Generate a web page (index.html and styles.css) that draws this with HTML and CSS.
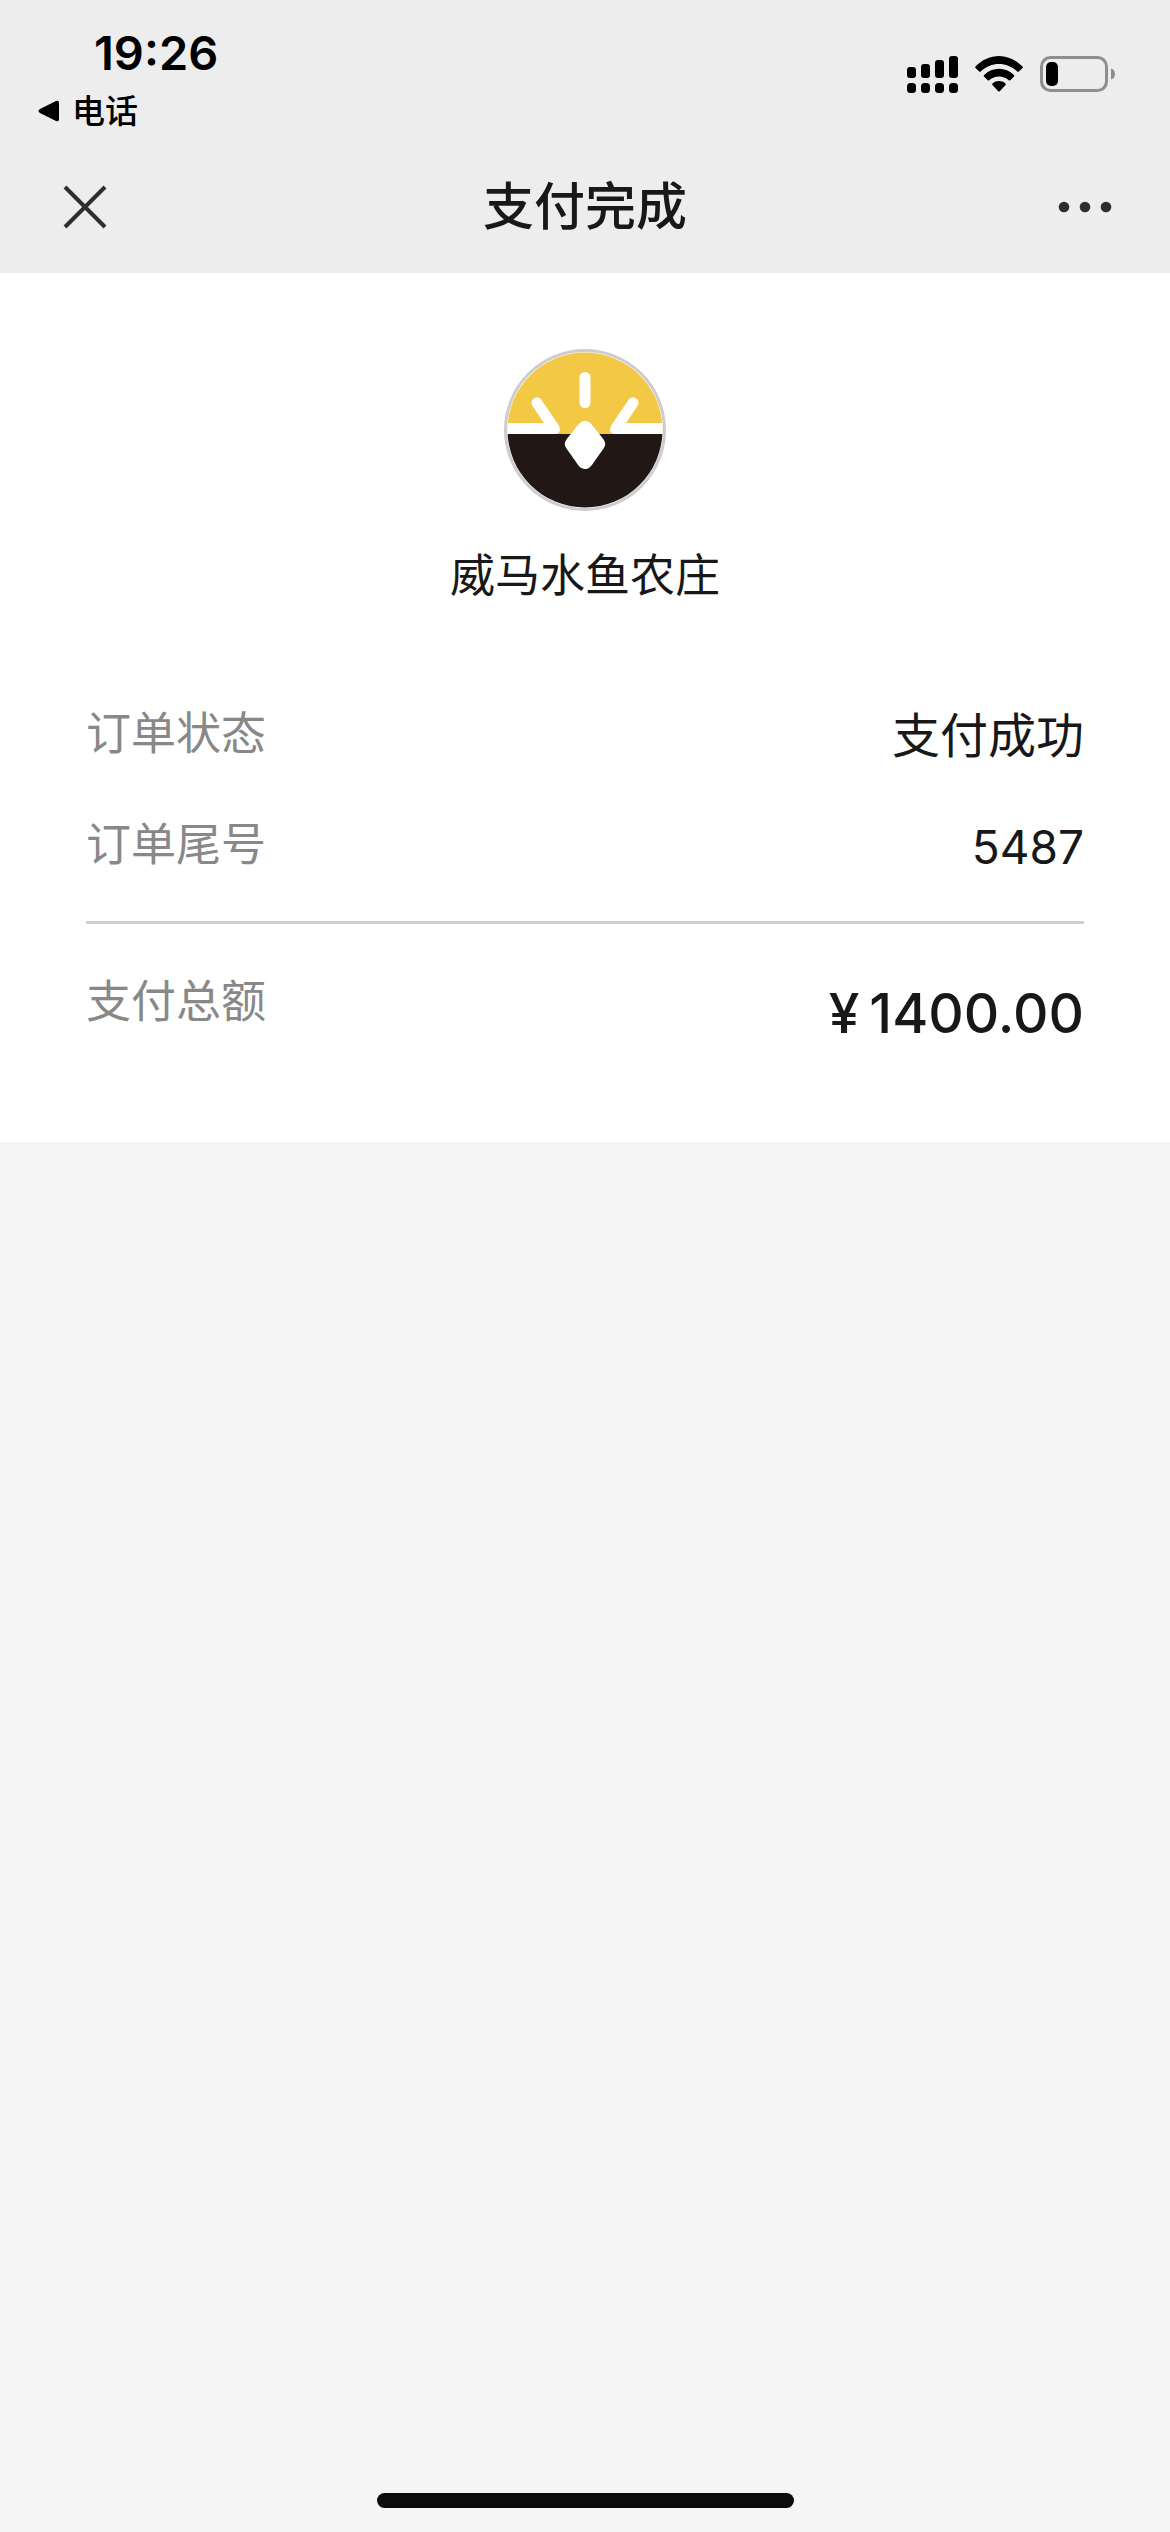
FILE: index.html
```
<!DOCTYPE html>
<html lang="zh-CN">
<head>
    <meta charset="UTF-8">
    <meta name="viewport" content="width=device-width, initial-scale=1.0">
    <title>支付完成</title>
    <link rel="stylesheet" href="styles.css">
</head>
<body>
    <header class="header">
        <div class="status-bar">
            <div class="status-left">
                <time class="time">19:26</time>
                <a class="back-link" href="#">
                    <svg width="22" height="22" viewBox="0 0 22 22" aria-hidden="true">
                        <path d="M2 9 L18 1 Q21 0 21 3 V19 Q21 22 18 21 L2 13 Q-1 11 2 9 Z"/>
                    </svg>
                    <span>电话</span>
                </a>
            </div>
            <div class="status-icons">
                <svg width="51" height="37" viewBox="0 0 51 37" aria-hidden="true">
                    <rect x="0" y="11" width="9" height="11" rx="3"/>
                    <rect x="14" y="8" width="9" height="14" rx="3"/>
                    <rect x="28" y="4" width="9" height="18" rx="3"/>
                    <rect x="42" y="0" width="9" height="22" rx="3"/>
                    <rect x="0" y="27" width="9" height="10" rx="3.500"/>
                    <rect x="14" y="27" width="9" height="10" rx="3.500"/>
                    <rect x="28" y="27" width="9" height="10" rx="3.500"/>
                    <rect x="42" y="27" width="9" height="10" rx="3.500"/>
                </svg>
                <svg width="48" height="37" viewBox="0 0 48 37" aria-hidden="true">
                    <path d="M0.500 10.500 C14 -3.500 34 -3.500 47.500 10.500 Q48.300 11.300 47.500 12 L43.800 15.600 Q43 16.200 42.300 15.500 C32 5.500 16 5.500 5.700 15.500 Q5 16.200 4.200 15.600 L0.500 12 Q-0.300 11.300 0.500 10.500 Z"/>
                    <path d="M9 19 C17.500 10.800 30.500 10.800 39 19 Q39.800 19.800 39 20.500 L35.300 24.200 Q34.600 24.800 33.800 24.200 C28 19.300 20 19.300 14.200 24.200 Q13.400 24.800 12.700 24.200 L9 20.500 Q8.200 19.800 9 19 Z"/>
                    <path d="M17.500 27.500 C21.300 24.300 26.700 24.300 30.500 27.500 Q31.300 28.300 30.500 29 L24.800 35.200 Q24 36 23.200 35.200 L17.500 29 Q16.700 28.300 17.500 27.500 Z"/>
                </svg>
                <svg width="75" height="36" viewBox="0 0 75 36" aria-hidden="true">
                    <rect class="battery-shell" x="1.500" y="1.500" width="65" height="33" rx="9"/>
                    <rect x="6" y="6" width="12" height="24" rx="5"/>
                    <path class="battery-cap" d="M71 12.500 Q75 13.500 75 18 Q75 22.500 71 23.500 Z"/>
                </svg>
            </div>
        </div>
        <nav class="nav-bar">
            <button class="nav-button" type="button" aria-label="关闭">
                <svg width="54" height="44" viewBox="0 0 54 44" aria-hidden="true">
                    <path class="close-icon" d="M7 2 L47 42 M47 2 L7 42"/>
                </svg>
            </button>
            <h1 class="title">支付完成</h1>
            <button class="nav-button nav-more" type="button" aria-label="更多">
                <svg width="54" height="12" viewBox="0 0 54 12" aria-hidden="true">
                    <circle cx="6" cy="6" r="5.300"/>
                    <circle cx="27" cy="6" r="5.300"/>
                    <circle cx="48" cy="6" r="5.300"/>
                </svg>
            </button>
        </nav>
    </header>

    <main class="receipt">
        <div class="merchant">
            <svg class="merchant-logo" width="162" height="162" viewBox="0 0 162 162" aria-hidden="true">
                <defs>
                    <clipPath id="logoClip"><circle cx="81" cy="81" r="77.500"/></clipPath>
                </defs>
                <circle cx="81" cy="81" r="79.500" fill="#fff" stroke="#cfcbce" stroke-width="3"/>
                <g clip-path="url(#logoClip)">
                    <rect width="162" height="85" fill="#f3c845"/>
                    <rect y="85" width="162" height="77" fill="#211815"/>
                    <path d="M81 28.500 V53.500" stroke="#fff" stroke-width="11" stroke-linecap="round"/>
                    <path d="M33 54 L50 79" stroke="#fff" stroke-width="11" stroke-linecap="round"/>
                    <path d="M129 54 L112 79" stroke="#fff" stroke-width="11" stroke-linecap="round"/>
                    <path d="M0 74 H45 L56 80 Q56 85 51 85 H0 Z M162 74 H117 L106 80 Q106 85 111 85 H162 Z" fill="#fff"/>
                    <path d="M81 80 L93 95 L81 112 L69 95 Z" fill="#fff" stroke="#fff" stroke-width="16" stroke-linejoin="round"/>
                </g>
            </svg>
            <h2 class="merchant-name">威马水鱼农庄</h2>
        </div>

        <dl class="details">
            <div class="row">
                <dt>订单状态</dt>
                <dd>支付成功</dd>
            </div>
            <div class="row">
                <dt>订单尾号</dt>
                <dd class="number">5487</dd>
            </div>
            <div class="row row-total">
                <dt>支付总额</dt>
                <dd class="amount"><span>¥</span><span>1400.00</span></dd>
            </div>
        </dl>
    </main>

    <footer class="home-area">
        <div class="home-indicator"></div>
    </footer>
</body>
</html>
```
FILE: styles.css
```
* {
    box-sizing: border-box;
}

body {
    display: flex;
    flex-direction: column;
    min-height: 100vh;
    margin: 0;
    background-color: #f5f5f5;
    color: #181818;
    font-family: Inter, "Noto Sans CJK SC", sans-serif;
}

h1, h2, dl, dd {
    margin: 0;
}

svg {
    display: block;
}

.header {
    background-color: #ededed;
}

.status-bar {
    display: flex;
    justify-content: space-between;
    height: 140px;
    padding: 24px 55px 0 38px;
    color: #000;
}

.time {
    display: block;
    padding-left: 56px;
    font-size: 47px;
    font-weight: 600;
    line-height: 58px;
}

.back-link {
    display: flex;
    align-items: center;
    gap: 12px;
    color: #000;
    font-size: 33px;
    font-weight: 500;
    line-height: 58px;
    text-decoration: none;
}

.status-icons {
    display: flex;
    align-items: flex-start;
    gap: 17px;
    padding-top: 32px;
}

.battery-shell {
    fill: none;
    stroke: #8e8e8e;
    stroke-width: 3;
}

.battery-cap {
    fill: #8e8e8e;
}

.nav-bar {
    display: grid;
    grid-template-columns: 1fr auto 1fr;
    align-items: center;
    height: 133px;
    padding: 0 58px;
}

.nav-button {
    justify-self: start;
    padding: 0;
    border: none;
    background: none;
    cursor: pointer;
}

.nav-more {
    justify-self: end;
}

.nav-more svg {
    fill: #2e2e2e;
}

.close-icon {
    stroke: #2e2e2e;
    stroke-width: 4;
}

.title {
    font-size: 51px;
    font-weight: 500;
    line-height: 72px;
}

.receipt {
    padding: 76px 86px 86px;
    background-color: #fff;
}

.merchant {
    display: flex;
    flex-direction: column;
    align-items: center;
    gap: 33px;
}

.merchant-name {
    font-size: 45px;
    font-weight: 400;
    line-height: 64px;
}

.details {
    margin-top: 94px;
}

.row {
    display: flex;
    justify-content: space-between;
}

.row + .row {
    margin-top: 43px;
}

.row dt {
    color: #888;
    font-size: 45px;
    line-height: 64px;
}

.row dd {
    font-size: 48px;
    line-height: 68px;
}

.row .number {
    font-size: 46px;
}

.row + .row-total {
    margin-top: 40px;
    padding-top: 46px;
    border-top: 3px solid #d0d0d0;
}

.row .amount {
    display: flex;
    gap: 10px;
    font-size: 55px;
    font-weight: 500;
    line-height: 86px;
}

.home-area {
    display: flex;
    justify-content: center;
    margin-top: auto;
    padding-bottom: 24px;
}

.home-indicator {
    width: 417px;
    height: 15px;
    border-radius: 8px;
    background-color: #0c0c0c;
}
```
